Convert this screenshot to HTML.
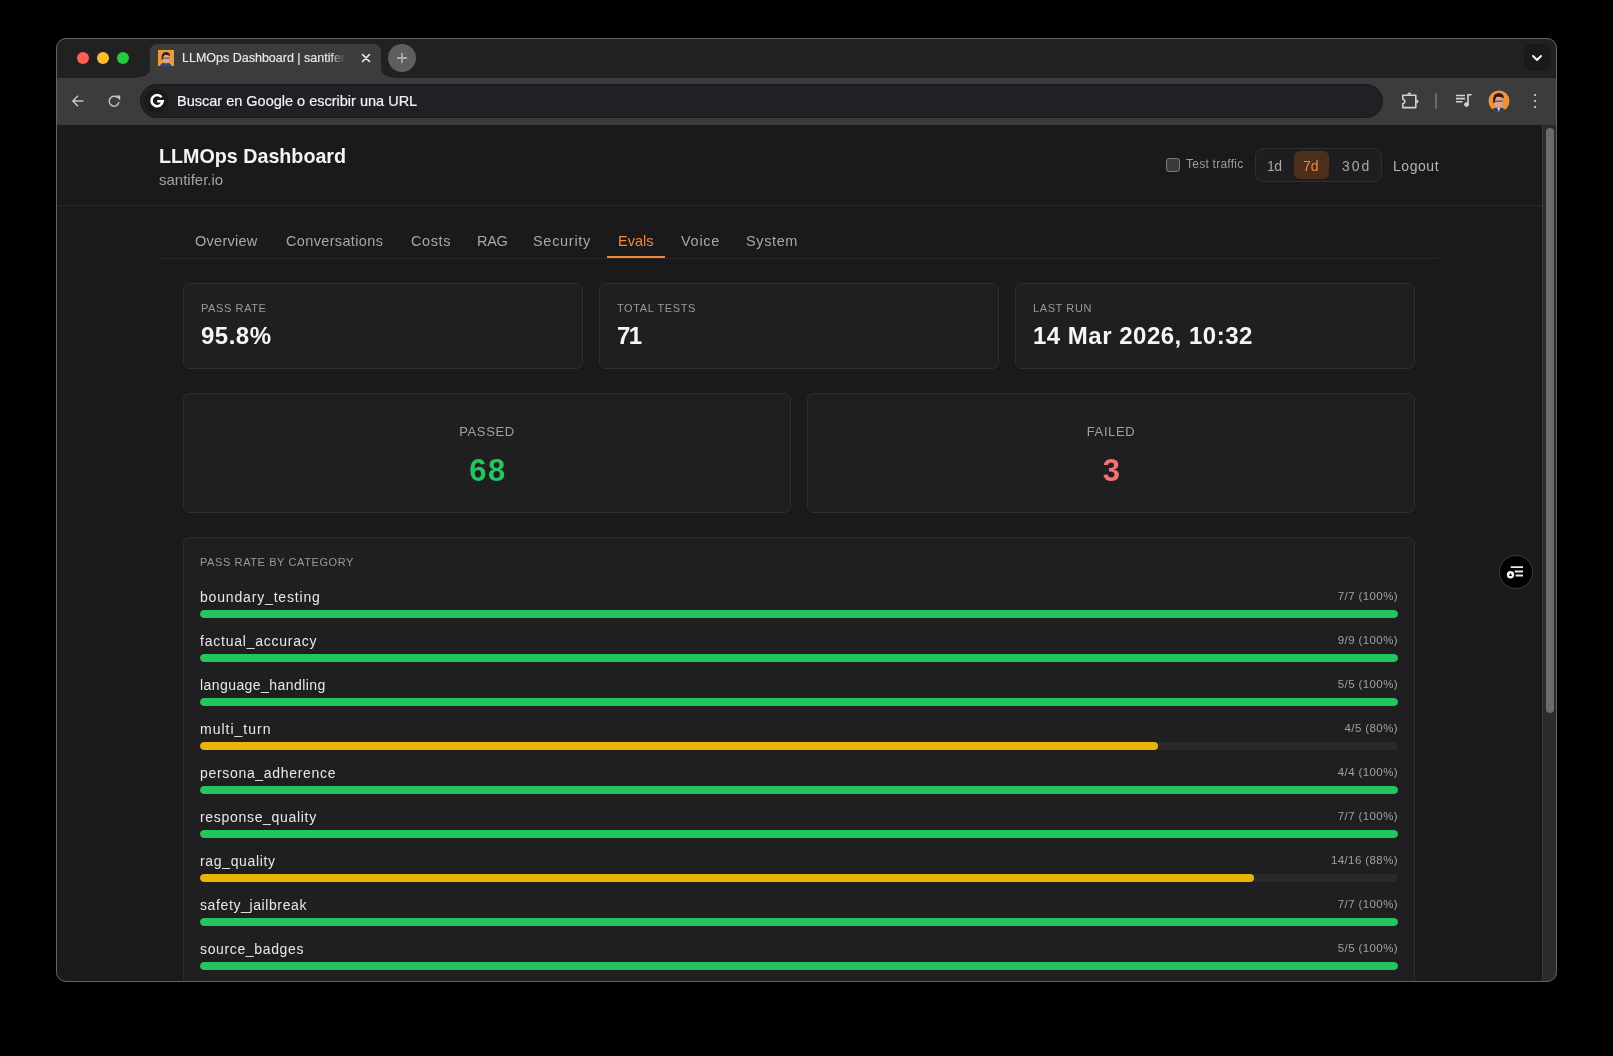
<!DOCTYPE html>
<html><head><meta charset="utf-8"><title>LLMOps Dashboard</title>
<style>
*{box-sizing:border-box;margin:0;padding:0}
html,body{width:1613px;height:1056px;overflow:hidden;background:#000;font-family:"Liberation Sans",sans-serif}
.a{position:absolute}
#win{position:absolute;left:56px;top:38px;width:1501px;height:944px;border-radius:10px;overflow:hidden;background:#212121}
#frame{position:absolute;left:56px;top:38px;width:1501px;height:944px;border-radius:10px;border:1px solid #636363;pointer-events:none}
#pg{position:absolute;left:-56px;top:-38px;width:1613px;height:1056px}
.dot{position:absolute;width:12px;height:12px;border-radius:50%}
.t{position:absolute;white-space:nowrap;line-height:1;will-change:transform}
.nav{top:234px;font-size:14.5px}
.card{position:absolute;background:#1f1f22;border:1px solid #2e2e31;border-radius:7px}
.lbl{font-size:11px;letter-spacing:0.6px;color:#9a9a9a}
.big{font-size:24px;font-weight:700;color:#f5f5f5;letter-spacing:0.5px}
.lbl2{font-size:13px;letter-spacing:0.6px;color:#a0a0a0}
.num{font-size:31px;font-weight:700;letter-spacing:1.5px}
.cat{font-size:14px;letter-spacing:0.75px;color:#e8e8e8}
.pct{font-size:11.5px;letter-spacing:0.4px;color:#a0a0a0}
.track{position:absolute;left:200px;width:1198px;height:8px;border-radius:4px;background:#29292c;overflow:hidden}
.track div{height:100%;border-radius:4px}
.seg{top:159px;font-size:14px}
svg{position:absolute;overflow:visible}
</style></head><body>
<div id="win"><div id="pg">
<div class="dot" style="left:77px;top:52px;background:#fe5f57"></div>
<div class="dot" style="left:97px;top:52px;background:#febc2e"></div>
<div class="dot" style="left:117px;top:52px;background:#28c840"></div>
<div class="a" style="left:56px;top:78px;width:1501px;height:47px;background:#3c3c3c"></div>
<svg style="left:136px;top:44px" width="260" height="34" viewBox="0 0 260 34"><path d="M0 33.5 Q14 33.5 14 23 L14 8 Q14 0 22 0 L237 0 Q245 0 245 8 L245 23 Q245 33.5 259 33.5 L259 34 L0 34 Z" fill="#3c3c3c"/></svg>
<svg style="left:158px;top:50px" width="16" height="16" viewBox="0 0 16 16">
<rect width="16" height="16" fill="#ee9a3c"/>
<path d="M1.5 16.5 Q3 12.8 7.8 12.6 Q12.6 12.8 14 16.5Z" fill="#33457a"/>
<ellipse cx="7.8" cy="8.8" rx="3.6" ry="4.6" fill="#dfa68a"/>
<path d="M3.6 9.8 Q2.8 2.2 8 2.1 Q12.2 2.3 12 6.2 Q10.2 4.6 6.5 5.1 Q5 6.4 4.8 9.8Z" fill="#3a2016"/>
<path d="M4.8 8.2H11.4" stroke="#5a6470" stroke-width="1.2"/>
</svg>
<div class="t" style="left:182px;top:52px;font-size:12.5px;color:#eaeaea;-webkit-text-stroke:0.15px #eaeaea">LLMOps Dashboard | santifer.io</div>
<div class="a" style="left:331px;top:46px;width:17px;height:24px;background:linear-gradient(90deg,rgba(60,60,60,0),rgba(60,60,60,.6) 40%,rgba(60,60,60,.9) 85%,#3c3c3c)"></div>
<div class="a" style="left:348px;top:46px;width:10px;height:24px;background:#3c3c3c"></div>
<svg style="left:362px;top:54px" width="8" height="8" viewBox="0 0 8 8"><path d="M0.5 0.5L7.5 7.5M7.5 0.5L0.5 7.5" stroke="#f2f2f2" stroke-width="1.6" stroke-linecap="round"/></svg>
<div class="a" style="left:388px;top:44px;width:28px;height:28px;border-radius:50%;background:#5e5e5e"></div>
<svg style="left:397px;top:53px" width="10" height="10" viewBox="0 0 10 10"><path d="M5 0V10M0 5H10" stroke="#a9a9a9" stroke-width="1.8"/></svg>
<div class="a" style="left:1524px;top:44px;width:27px;height:27px;border-radius:8px;background:#1a1a1a"></div>
<svg style="left:1532px;top:55px" width="10" height="6" viewBox="0 0 10 6"><path d="M1 1L5 5L9 1" stroke="#fff" stroke-width="1.9" fill="none" stroke-linecap="round" stroke-linejoin="round"/></svg>
<svg style="left:72px;top:95px" width="12" height="12" viewBox="0 0 12 12"><path d="M11.5 6H1M6 0.8L0.9 6L6 11.2" stroke="#c4c4c4" stroke-width="1.5" fill="none"/></svg>
<svg style="left:108px;top:95px" width="13" height="13" viewBox="0 0 13 13"><path d="M10.9 7.2A4.9 4.9 0 1 1 9.6 2.8" stroke="#c4c4c4" stroke-width="1.5" fill="none"/><path d="M7.4 0.6H12.2V5.4Z" fill="#c4c4c4"/></svg>
<div class="a" style="left:140px;top:84px;width:1243px;height:34px;border-radius:17px;background:#202124;border:1px solid #19191a"></div>
<div class="a" style="left:144px;top:89px;width:24px;height:24px;border-radius:50%;background:#1a1a1b"></div>
<svg style="left:150px;top:94px" width="14" height="14" viewBox="0 0 14 14"><path d="M11.6 3.2A5.6 5.6 0 1 0 12.7 7.2H7.2" stroke="#fff" stroke-width="2.6" fill="none"/></svg>
<div class="t" style="left:177px;top:94px;font-size:14.5px;color:#f2f2f2;-webkit-text-stroke:0.2px #f2f2f2">Buscar en Google o escribir una URL</div>
<svg style="left:1401px;top:92px" width="18" height="17" viewBox="0 0 18 17"><path d="M1.8 3.2H14.8V15.6H1.8V11.8Q3.9 11 3.9 9.4Q3.9 7.8 1.8 7Z" stroke="#d2d2d2" stroke-width="1.6" fill="none" stroke-linejoin="round"/><path d="M6.3 2.6Q6.3 0.4 8.3 0.4Q10.3 0.4 10.3 2.6Z" fill="#d2d2d2"/><path d="M15.4 7.4Q17.4 7.4 17.4 9.4Q17.4 11.4 15.4 11.4Z" fill="#d2d2d2"/></svg>
<div class="a" style="left:1435px;top:93px;width:2px;height:16px;background:#6a6a6a;border-radius:1px"></div>
<svg style="left:1455px;top:93px" width="18" height="15" viewBox="0 0 18 15"><path d="M1 2.5H10M1 5.6H10M1 8.8H7.5" stroke="#d2d2d2" stroke-width="1.6"/><path d="M13 11.5V1.8H16.5" stroke="#d2d2d2" stroke-width="1.6" fill="none"/><circle cx="11.5" cy="11.6" r="2.4" fill="#d2d2d2"/></svg>
<svg style="left:1488px;top:90px" width="22" height="22" viewBox="0 0 22 22">
<defs><clipPath id="av"><circle cx="11" cy="11" r="10.5"/></clipPath></defs>
<g clip-path="url(#av)">
<rect width="22" height="22" fill="#ee9339"/>
<path d="M2 23 Q4 17.5 10.5 17.2 Q17 17.5 19 23Z" fill="#2d3a66"/>
<path d="M9.2 18 L10.8 21.5 L12.2 18Z" fill="#e8ddd6"/>
<ellipse cx="10.6" cy="12" rx="4.6" ry="6.1" fill="#dca487"/>
<path d="M5.2 13 Q4 3.2 10.8 3 Q16 3.2 15.8 8.4 Q13.5 6.2 8.6 6.8 Q6.8 8.6 6.6 13Z" fill="#2a1912"/>
<path d="M6.6 11.2H14.8" stroke="#56606a" stroke-width="1.4"/>
</g></svg>
<div class="a" style="left:1533.8px;top:93.8px;width:2.5px;height:2.5px;border-radius:50%;background:#e2e2e2"></div>
<div class="a" style="left:1533.8px;top:99.8px;width:2.5px;height:2.5px;border-radius:50%;background:#e2e2e2"></div>
<div class="a" style="left:1533.8px;top:105.8px;width:2.5px;height:2.5px;border-radius:50%;background:#e2e2e2"></div>
<div class="a" style="left:56px;top:125px;width:1486px;height:857px;background:#1a1a1c"></div>
<div class="a" style="left:1542px;top:125px;width:15px;height:857px;background:#2b2b2b;border-left:1px solid #3a3a3a"></div>
<div class="a" style="left:1546px;top:128px;width:8px;height:585px;border-radius:4px;background:#6b6b6b"></div>
<div class="t" style="left:159px;top:147px;font-size:19.7px;font-weight:700;color:#f4f4f4">LLMOps Dashboard</div>
<div class="t" style="left:159px;top:172px;font-size:15px;color:#a3a3a3">santifer.io</div>
<div class="a" style="left:56px;top:205px;width:1486px;height:1px;background:#2a2a2c"></div>
<div class="a" style="left:1166px;top:158px;width:14px;height:14px;border:1px solid #7a7a7a;border-radius:3px;background:#3b3b3b"></div>
<div class="t" style="left:1186px;top:158px;font-size:12px;color:#9c9c9c;letter-spacing:0.25px">Test traffic</div>
<div class="a" style="left:1255px;top:148px;width:127px;height:34px;border:1px solid #2f2f32;border-radius:8px;background:#1e1e20"></div>
<div class="a" style="left:1294px;top:151px;width:35px;height:28px;border-radius:6px;background:#4b2e1c"></div>
<div class="t seg" style="left:1267px;color:#a8a8a8;letter-spacing:-0.5px">1d</div>
<div class="t seg" style="left:1303px;color:#f0883e">7d</div>
<div class="t seg" style="left:1342px;color:#a8a8a8;letter-spacing:2px">30d</div>
<div class="t seg" style="left:1393px;color:#b4b4b4;letter-spacing:0.55px">Logout</div>
<div class="t nav" style="left:195px;color:#a8a8a8;letter-spacing:0.27px">Overview</div>
<div class="t nav" style="left:286px;color:#a8a8a8;letter-spacing:0.35px">Conversations</div>
<div class="t nav" style="left:411px;color:#a8a8a8;letter-spacing:0.58px">Costs</div>
<div class="t nav" style="left:477px;color:#a8a8a8;letter-spacing:-0.3px">RAG</div>
<div class="t nav" style="left:533px;color:#a8a8a8;letter-spacing:0.7px">Security</div>
<div class="t nav" style="left:618px;color:#f0883e;letter-spacing:0px">Evals</div>
<div class="t nav" style="left:681px;color:#a8a8a8;letter-spacing:0.72px">Voice</div>
<div class="t nav" style="left:746px;color:#a8a8a8;letter-spacing:0.62px">System</div>
<div class="a" style="left:159px;top:258px;width:1280px;height:1px;background:#2a2a2c"></div>
<div class="a" style="left:607px;top:256px;width:58px;height:2px;background:#f0883e"></div>
<div class="card" style="left:183px;top:283px;width:400px;height:86px"></div>
<div class="t lbl" style="left:201px;top:303px">PASS RATE</div>
<div class="t big" style="left:201px;top:324px">95.8%</div>
<div class="card" style="left:599px;top:283px;width:400px;height:86px"></div>
<div class="t lbl" style="left:617px;top:303px">TOTAL TESTS</div>
<div class="t big" style="left:617px;top:324px;letter-spacing:-1.5px">71</div>
<div class="card" style="left:1015px;top:283px;width:400px;height:86px"></div>
<div class="t lbl" style="left:1033px;top:303px">LAST RUN</div>
<div class="t big" style="left:1033px;top:324px">14 Mar 2026, 10:32</div>
<div class="card" style="left:183px;top:393px;width:608px;height:120px"></div>
<div class="t lbl2" style="left:183px;width:608px;text-align:center;top:425px">PASSED</div>
<div class="t num" style="left:184px;width:608px;text-align:center;top:455px;color:#22c55e">68</div>
<div class="card" style="left:807px;top:393px;width:608px;height:120px"></div>
<div class="t lbl2" style="left:807px;width:608px;text-align:center;top:425px">FAILED</div>
<div class="t num" style="left:808px;width:608px;text-align:center;top:455px;color:#f87171">3</div>
<div class="card" style="left:183px;top:537px;width:1232px;height:600px"></div>
<div class="t lbl" style="left:200px;top:557px">PASS RATE BY CATEGORY</div>
<div class="t cat" style="left:200px;top:590px;letter-spacing:0.83px">boundary_testing</div>
<div class="t pct" style="left:1198px;width:200px;text-align:right;top:591px">7/7 (100%)</div>
<div class="track" style="top:610px"><div style="width:100%;background:#22c55e"></div></div>
<div class="t cat" style="left:200px;top:634px;letter-spacing:0.77px">factual_accuracy</div>
<div class="t pct" style="left:1198px;width:200px;text-align:right;top:635px">9/9 (100%)</div>
<div class="track" style="top:654px"><div style="width:100%;background:#22c55e"></div></div>
<div class="t cat" style="left:200px;top:678px;letter-spacing:0.43px">language_handling</div>
<div class="t pct" style="left:1198px;width:200px;text-align:right;top:679px">5/5 (100%)</div>
<div class="track" style="top:698px"><div style="width:100%;background:#22c55e"></div></div>
<div class="t cat" style="left:200px;top:722px;letter-spacing:1.0px">multi_turn</div>
<div class="t pct" style="left:1198px;width:200px;text-align:right;top:723px">4/5 (80%)</div>
<div class="track" style="top:742px"><div style="width:80%;background:#eab308"></div></div>
<div class="t cat" style="left:200px;top:766px;letter-spacing:0.68px">persona_adherence</div>
<div class="t pct" style="left:1198px;width:200px;text-align:right;top:767px">4/4 (100%)</div>
<div class="track" style="top:786px"><div style="width:100%;background:#22c55e"></div></div>
<div class="t cat" style="left:200px;top:810px;letter-spacing:0.69px">response_quality</div>
<div class="t pct" style="left:1198px;width:200px;text-align:right;top:811px">7/7 (100%)</div>
<div class="track" style="top:830px"><div style="width:100%;background:#22c55e"></div></div>
<div class="t cat" style="left:200px;top:854px;letter-spacing:0.66px">rag_quality</div>
<div class="t pct" style="left:1198px;width:200px;text-align:right;top:855px">14/16 (88%)</div>
<div class="track" style="top:874px"><div style="width:88%;background:#eab308"></div></div>
<div class="t cat" style="left:200px;top:898px;letter-spacing:0.61px">safety_jailbreak</div>
<div class="t pct" style="left:1198px;width:200px;text-align:right;top:899px">7/7 (100%)</div>
<div class="track" style="top:918px"><div style="width:100%;background:#22c55e"></div></div>
<div class="t cat" style="left:200px;top:942px;letter-spacing:0.64px">source_badges</div>
<div class="t pct" style="left:1198px;width:200px;text-align:right;top:943px">5/5 (100%)</div>
<div class="track" style="top:962px"><div style="width:100%;background:#22c55e"></div></div>
<div class="a" style="left:1499px;top:555px;width:34px;height:34px;border-radius:50%;background:#000;border:1px solid #3c3c3c"></div>
<svg style="left:1506px;top:565px" width="20" height="15" viewBox="0 0 20 15"><path d="M4.7 2.2H17M8.7 6.5H17M9.6 10.5H17" stroke="#e8e8e8" stroke-width="1.8"/><circle cx="4.5" cy="9.7" r="3.7" fill="#f4f4f4"/><path d="M4.5 8L6.1 10.9H2.9Z" fill="#000"/></svg>
</div></div>
<div id="frame"></div>
</body></html>
